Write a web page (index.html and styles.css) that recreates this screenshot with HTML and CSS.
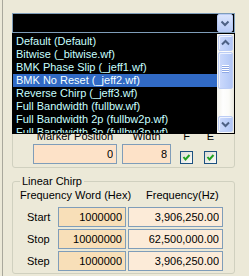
FILE: index.html
```
<!DOCTYPE html>
<html>
	<head>
		<meta charset="utf-8">
		<title></title>
		<link rel="stylesheet" href="styles.css">
	</head>
	<body>
		<div class="window">
			<div class="combo">
				<div class="combo-btn">
					<svg width="16" height="18" viewBox="0 0 16 18"><polyline points="4.5,7.5 8,11 11.5,7.5" fill="none" stroke="#4d6185" stroke-width="2"/></svg>
				</div>
			</div>
			<!-- open dropdown of the combo -->
			<div class="dropdown">
				<ul class="options">
					<li>Default (Default)</li>
					<li>Bitwise (_bitwise.wf)</li>
					<li>BMK Phase Slip (_jeff1.wf)</li>
					<li class="sel">BMK No Reset (_jeff2.wf)</li>
					<li>Reverse Chirp (_jeff3.wf)</li>
					<li>Full Bandwidth (fullbw.wf)</li>
					<li>Full Bandwidth 2p (fullbw2p.wf)</li>
					<li>Full Bandwidth 3p (fullbw3p.wf)</li>
				</ul>
				<div class="scrollbar">
					<div class="sb-btn">
						<svg width="15" height="16" viewBox="0 0 15 16"><polyline points="4,9.5 7.5,6 11,9.5" fill="none" stroke="#4d6185" stroke-width="2"/></svg>
					</div>
					<div class="sb-thumb">
						<svg width="15" height="35" viewBox="0 0 15 35">
							<g stroke-width="1">
								<line x1="4" y1="13.5" x2="11" y2="13.5" stroke="#fff"/>
								<line x1="4" y1="14.5" x2="11" y2="14.5" stroke="#8fa9e6"/>
								<line x1="4" y1="15.5" x2="11" y2="15.5" stroke="#fff"/>
								<line x1="4" y1="16.5" x2="11" y2="16.5" stroke="#8fa9e6"/>
								<line x1="4" y1="17.5" x2="11" y2="17.5" stroke="#fff"/>
								<line x1="4" y1="18.5" x2="11" y2="18.5" stroke="#8fa9e6"/>
								<line x1="4" y1="19.5" x2="11" y2="19.5" stroke="#fff"/>
								<line x1="4" y1="20.5" x2="11" y2="20.5" stroke="#8fa9e6"/>
							</g>
						</svg>
					</div>
					<div class="sb-track"></div>
					<div class="sb-btn">
						<svg width="15" height="16" viewBox="0 0 15 16"><polyline points="4,6.5 7.5,10 11,6.5" fill="none" stroke="#4d6185" stroke-width="2"/></svg>
					</div>
				</div>
			</div>

			<div class="group">
				<div class="field">
					<span class="cap">Marker Position</span>
					<input class="num marker" type="text" value="0">
				</div>
				<div class="field f-width">
					<span class="cap">Width</span>
					<input class="num width" type="text" value="8">
				</div>
				<div class="field f-f">
					<span class="cap">F</span>
					<span class="check"><svg width="11" height="11" viewBox="0 0 11 11"><polyline points="2.5,5 4.5,7.5 8.5,3" fill="none" stroke="#21a121" stroke-width="2"/></svg></span>
				</div>
				<div class="field f-e">
					<span class="cap">E</span>
					<span class="check"><svg width="11" height="11" viewBox="0 0 11 11"><polyline points="2.5,5 4.5,7.5 8.5,3" fill="none" stroke="#21a121" stroke-width="2"/></svg></span>
				</div>
			</div>

			<fieldset class="chirp">
				<legend>Linear Chirp</legend>
				<div class="chirp-grid">
					<span class="head-hex">Frequency Word (Hex)</span>
					<span class="head-hz">Frequency(Hz)</span>

					<span class="row-label">Start</span>
					<input class="num hex" type="text" value="1000000">
					<input class="num hz" type="text" value="3,906,250.00">

					<span class="row-label">Stop</span>
					<input class="num hex" type="text" value="10000000">
					<input class="num hz" type="text" value="62,500,000.00">

					<span class="row-label">Step</span>
					<input class="num hex" type="text" value="1000000">
					<input class="num hz" type="text" value="3,906,250.00">
				</div>
			</fieldset>
		</div>
	</body>
</html>
```

FILE: styles.css
```
*{margin: 0;padding: 0;box-sizing: border-box;}
html,body{height: 100%;}
body{
	background: #ece9d8;
	font: 11px "Liberation Sans", Arial, sans-serif;
	color: #000;
	overflow: hidden;
}
.window{
	position: relative;
	height: 100%;
	margin-left: 2px;
	border-left: 1px solid #a9a89c;
	padding: 13px 0 0 9px;
}

/* combo */
.combo{
	display: flex;
	justify-content: flex-end;
	width: 223px;
	height: 20px;
	border: 1px solid #7f9db9;
	background: #000;
	padding-right: 1px;
}
.combo-btn{
	width: 16px;
	height: 18px;
	border: 1px solid #b9cbf5;
	border-radius: 2px;
	background: linear-gradient(#dbe5fd, #b8cbf7);
	display: flex;
	align-items: center;
	justify-content: center;
}
.combo-btn svg{display: block;margin: -1px;}

.dropdown{
	position: absolute;
	left: 9px;
	top: 33px;
	width: 223px;
	height: 101px;
	border: 1px solid #000;
	background: #000;
	display: flex;
	z-index: 2;
}
.options{
	flex: 1;
	list-style: none;
	padding-top: 1px;
	overflow: hidden;
}
.options li{
	height: 13px;
	line-height: 13px;
	padding-left: 3px;
	color: #c8ffff;
	white-space: nowrap;
	overflow: hidden;
}
.options li.sel{
	background: #316ac5;
	color: #f4ffff;
}
.scrollbar{
	width: 17px;
	display: flex;
	flex-direction: column;
	background: linear-gradient(to right, #f2f1ea, #fefefe 35%, #fbfbf8 70%, #e9e8df);
}
.sb-btn, .sb-thumb{
	margin: 1px 1px 0 1px;
	border: 1px solid #bccdf5;
	border-radius: 2px;
	background: linear-gradient(to right, #cddafc, #bccff9 60%, #b3c6f5);
	box-shadow: inset 1px 1px #eef3ff;
}
.sb-btn{height: 16px;}
.sb-btn svg, .sb-thumb svg{display: block;margin: -1px;}
.sb-thumb{height: 37px;}
.sb-track{flex: 1;}
.sb-btn:last-child{margin: 0 1px 1px 1px;}

/* marker group */
.group{
	margin-top: 7px;
	width: 223px;
	height: 128px;
	border: 1px solid #d0d0bf;
	border-radius: 3px;
	display: flex;
	align-items: flex-end;
	padding: 0 0 3px 20px;
}
.field{
	display: flex;
	flex-direction: column;
	align-items: center;
}
.cap{
	line-height: 13px;
	margin-bottom: 1px;
	white-space: nowrap;
}
.f-width{margin-left: 5px;}
.f-f{margin-left: 9px;}
.f-e{margin-left: 11px;}
.check{
	margin-top: 7px;
	width: 13px;
	height: 13px;
	border: 1px solid #1c5180;
	background: linear-gradient(135deg, #dcdcd5, #fbfbf9);
}
.check svg{display: block;}

.num{
	height: 20px;
	border: 1px solid #7f9db9;
	font: 11px "Liberation Sans", Arial, sans-serif;
	color: #000;
	text-align: right;
	padding: 0 3px 0 0;
	outline: none;
}
.marker{width: 84px;background: #fde2c8;}
.width{width: 49px;background: #fde2c8;}

/* linear chirp */
.chirp{
	margin-top: 7px;
	width: 223px;
	border: 1px solid #d0d0bf;
	border-radius: 3px;
	padding: 1px 0 2px 0;
}
.chirp legend{
	margin-left: 7px;
	padding: 0 2px;
	line-height: 13px;
}
.chirp-grid{
	display: grid;
	grid-template-columns: 45px 68px 97px;
	row-gap: 2px;
	align-items: center;
}
.head-hex{
	grid-column: 1 / 3;
	padding-left: 7px;
	line-height: 13px;
	margin-bottom: 3px;
	white-space: nowrap;
}
.head-hz{
	padding-left: 20px;
	line-height: 13px;
	margin-bottom: 3px;
	white-space: nowrap;
}
.row-label{padding-left: 14px;}
.hex{width: 68px;background: #f8dfb8;}
.hz{width: 95px;margin-left: 2px;background: #fcebd8;}
```
